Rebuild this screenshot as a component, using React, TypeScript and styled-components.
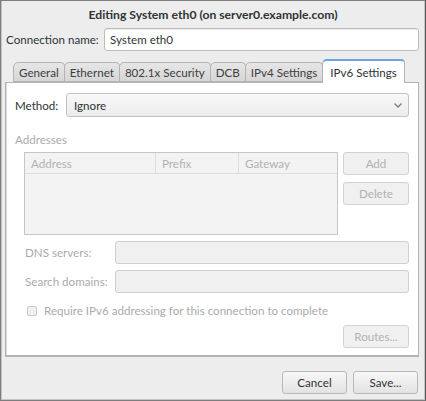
import React from "react";
import styled, { createGlobalStyle } from "styled-components";

const Global = createGlobalStyle`
  html, body { margin: 0; padding: 0; background: #ededed; }
  * { box-sizing: border-box; }
  body { font-family: Lato, "Noto Sans", sans-serif; font-size: 11.6px; color: #2e3436; }
`;

const Window = styled.div`
  width: 426px;
  height: 401px;
  background: #ededed;
  border: 1px solid #7d7d7d;
  border-right-color: #5a5a5a;
  box-shadow: inset 1px 0 0 #c4c4c4, inset -1px 0 0 #c4c4c4, inset 0 -1px 0 #c4c4c4;
  display: flex;
  flex-direction: column;
  overflow: hidden;
`;

const TitleBar = styled.div`
  height: 25px;
  display: flex;
  align-items: center;
  justify-content: center;
  font-weight: bold;
  font-size: 12.2px;
  color: #2e3436;
  padding-top: 1px;
`;

const Body = styled.div`
  display: flex;
  flex-direction: column;
  padding: 2px 6px 0 4px;
`;

const Row = styled.div<{ $indent?: number; $mt?: number }>`
  display: flex;
  align-items: center;
  margin-left: ${(p) => p.$indent ?? 0}px;
  margin-top: ${(p) => p.$mt ?? 0}px;
`;

const Label = styled.span<{ $w: number; $disabled?: boolean }>`
  width: ${(p) => p.$w}px;
  flex: none;
  color: ${(p) => (p.$disabled ? "#a9abab" : "#2e3436")};
  white-space: nowrap;
`;

const Entry = styled.div<{ $disabled?: boolean }>`
  flex: 1;
  height: 23px;
  border: 1px solid ${(p) => (p.$disabled ? "#cfcfcf" : "#bcbcbc")};
  border-radius: 3px;
  background: ${(p) => (p.$disabled ? "#f0f0f0" : "#ffffff")};
  box-shadow: ${(p) => (p.$disabled ? "none" : "inset 0 1px 1px rgba(0,0,0,0.08)")};
  padding: 0 5px;
  display: flex;
  align-items: center;
  white-space: nowrap;
`;

const Notebook = styled.div`
  margin-top: 8px;
  display: flex;
  flex-direction: column;
`;

const TabStrip = styled.div`
  display: flex;
  align-items: flex-end;
  height: 23px;
  padding-left: 8px;
  position: relative;
  z-index: 1;
`;

const Tab = styled.div<{ $active?: boolean }>`
  height: ${(p) => (p.$active ? 24 : 20)}px;
  margin-bottom: ${(p) => (p.$active ? -1 : 0)}px;
  padding: 0 ${(p) => (p.$active ? 7 : 5)}px;
  display: flex;
  align-items: center;
  white-space: nowrap;
  background: ${(p) =>
    p.$active ? "#ffffff" : "linear-gradient(#e6e6e6, #d6d6d6)"};
  border: 1px solid #b3b3b3;
  border-bottom: ${(p) => (p.$active ? "none" : "1px solid #b3b3b3")};
  border-top: ${(p) => (p.$active ? "2px solid #6fa5dc" : "1px solid #b3b3b3")};
  border-radius: 5px 4px 0 0;
  margin-right: -1px;
  color: ${(p) => (p.$active ? "#2e3436" : "#3c4042")};
`;

const Panel = styled.div`
  height: 275px;
  width: 414px;
  background: #ffffff;
  border: 1px solid #b3b3b3;
  border-bottom-width: 2px;
  box-shadow: inset 1px 0 0 #dcdcdc;
  padding: 10px 9px 0 9px;
  display: flex;
  flex-direction: column;
`;

const Combo = styled.div`
  flex: 1;
  height: 24px;
  border: 1px solid #c2c2c2;
  border-radius: 3px;
  background: linear-gradient(#f8f8f8, #ececec);
  display: flex;
  align-items: center;
  justify-content: space-between;
  padding: 0 5px 0 7px;
`;

const SectionTitle = styled.div`
  margin-top: 16px;
  color: #a9abab;
`;

const AddrArea = styled.div`
  display: flex;
  margin-top: 6px;
  padding-left: 9px;
  gap: 5px;
`;

const Table = styled.div`
  width: 316px;
  height: 83px;
  border: 1px solid #c6c6c6;
  background: #f3f3f3;
  display: flex;
  flex-direction: column;
`;

const THead = styled.div`
  display: grid;
  grid-template-columns: 131px 83px 1fr;
  height: 21px;
  border-bottom: 1px solid #dddddd;
`;

const TH = styled.div<{ $last?: boolean }>`
  padding-left: 6px;
  display: flex;
  align-items: center;
  color: #b0b2b2;
  border-right: ${(p) => (p.$last ? "none" : "1px solid #dddddd")};
`;

const BtnCol = styled.div`
  display: flex;
  flex-direction: column;
  gap: 7px;
`;

const Button = styled.div<{ $disabled?: boolean; $w?: number }>`
  width: ${(p) => p.$w ?? 66}px;
  height: 23px;
  border: 1px solid ${(p) => (p.$disabled ? "#d2d2d2" : "#b8b8b8")};
  border-radius: 3px;
  background: ${(p) =>
    p.$disabled ? "#f0f0f0" : "linear-gradient(#f7f7f7, #e3e3e3)"};
  color: ${(p) => (p.$disabled ? "#b0b2b2" : "#2e3436")};
  display: flex;
  align-items: center;
  justify-content: center;
  white-space: nowrap;
`;

const CheckRow = styled.div`
  display: flex;
  align-items: center;
  margin-top: 11px;
  margin-left: 12px;
  color: #a9abab;
  gap: 7px;
`;

const CheckBox = styled.div`
  width: 10px;
  height: 10px;
  border: 1px solid #c9c9c9;
  border-radius: 2px;
  background: #f0f0f0;
`;

const RightRow = styled.div<{ $mt: number }>`
  display: flex;
  justify-content: flex-end;
  margin-top: ${(p) => p.$mt}px;
  gap: 6px;
`;

const Footer = styled.div`
  display: flex;
  justify-content: flex-end;
  gap: 6px;
  padding: 14px 7px 0 0;
`;

const Chevron = () => (
  <svg width="10" height="7" viewBox="0 0 10 7">
    <path d="M1.5 1.5 L5 5 L8.5 1.5" fill="none" stroke="#7a7a7a" strokeWidth="1.3" />
  </svg>
);

export default function App() {
  return (
    <>
      <Global />
      <Window>
        <TitleBar>Editing System eth0 (on server0.example.com)</TitleBar>
        <Body>
          <Row $indent={1}>
            <Label $w={98}>Connection name:</Label>
            <Entry>System eth0</Entry>
          </Row>
          <Notebook>
            <TabStrip>
              <Tab>General</Tab>
              <Tab>Ethernet</Tab>
              <Tab>802.1x Security</Tab>
              <Tab>DCB</Tab>
              <Tab>IPv4 Settings</Tab>
              <Tab $active>IPv6 Settings</Tab>
            </TabStrip>
            <Panel>
              <Row>
                <Label $w={51}>Method:</Label>
                <Combo>
                  <span>Ignore</span>
                  <Chevron />
                </Combo>
              </Row>
              <SectionTitle>Addresses</SectionTitle>
              <AddrArea>
                <Table>
                  <THead>
                    <TH>Address</TH>
                    <TH>Prefix</TH>
                    <TH $last>Gateway</TH>
                  </THead>
                </Table>
                <BtnCol>
                  <Button $disabled>Add</Button>
                  <Button $disabled>Delete</Button>
                </BtnCol>
              </AddrArea>
              <Row $indent={10} $mt={6}>
                <Label $w={90} $disabled>DNS servers:</Label>
                <Entry $disabled />
              </Row>
              <Row $indent={10} $mt={6}>
                <Label $w={90} $disabled>Search domains:</Label>
                <Entry $disabled />
              </Row>
              <CheckRow>
                <CheckBox />
                <span>Require IPv6 addressing for this connection to complete</span>
              </CheckRow>
              <RightRow $mt={8}>
                <Button $disabled>Routes...</Button>
              </RightRow>
            </Panel>
          </Notebook>
        </Body>
        <Footer>
          <Button $w={65}>Cancel</Button>
          <Button $w={65}>Save...</Button>
        </Footer>
      </Window>
    </>
  );
}
